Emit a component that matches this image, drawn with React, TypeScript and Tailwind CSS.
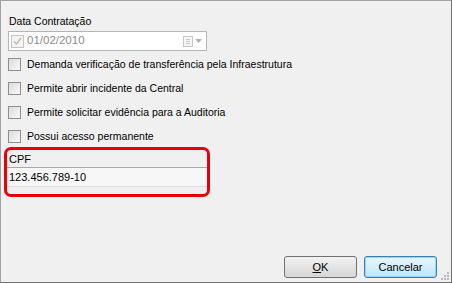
import React from "react";

const checks = [
  "Demanda verificação de transferência pela Infraestrutura",
  "Permite abrir incidente da Central",
  "Permite solicitar evidência para a Auditoria",
  "Possui acesso permanente",
];

function Box({ disabled }: { disabled?: boolean }) {
  return (
    <span
      className={`w-[13px] h-[13px] shrink-0 border ${disabled ? "border-[#c5c5c5] bg-[#f4f4f4]" : "border-[#8f8f8f] bg-gradient-to-br from-[#dcdcdc] to-[#fafafa]"} flex items-center justify-center`}
    >
      {disabled && (
        <svg width="9" height="9" viewBox="0 0 9 9">
          <path d="M1 4.5 L3.5 7 L8 1" fill="none" stroke="#b8b8b8" strokeWidth="1.4" />
        </svg>
      )}
    </span>
  );
}

export default function App() {
  return (
    <div
      className="w-[452px] h-[283px] bg-[#f0f0f0] border border-[#6f6f6f] border-t-[#a0a0a0] border-l-[#a0a0a0] relative text-[10.5px] text-black flex flex-col"
      style={{ fontFamily: '"Liberation Sans", Arial, sans-serif' }}
    >
      <div className="pl-[7px] pt-[14px] flex flex-col">
        <div className="pl-[1px] h-[13px] leading-[13px]">Data Contratação</div>
        <div className="mt-[3px] w-[199px] h-[20px] border border-[#b5b5b5] bg-white flex items-center pl-[2px] pr-[4px]">
          <Box disabled />
          <span className="ml-[3px] text-[#8a8a8a] text-[11.5px]">01/02/2010</span>
          <span className="ml-auto flex items-center gap-[2px]">
            <span className="w-[10px] h-[11px] border border-[#c8c8c8] bg-[#f6f6f6] flex flex-col justify-center gap-[1px] px-[2px]">
              <span className="h-px bg-[#c8c8c8]" />
              <span className="h-px bg-[#c8c8c8]" />
              <span className="h-px bg-[#c8c8c8]" />
            </span>
            <svg width="7" height="4" viewBox="0 0 7 4">
              <path d="M0 0 L7 0 L3.5 4 Z" fill="#b0b0b0" />
            </svg>
          </span>
        </div>
        <div className="mt-[7px] flex flex-col gap-[11px]">
          {checks.map((c) => (
            <div key={c} className="flex items-center h-[13px]">
              <Box />
              <span className="ml-[6px] leading-[13px]">{c}</span>
            </div>
          ))}
        </div>
      </div>
      <div className="ml-[3px] mt-[4px] w-[206px] h-[50px] border-[3px] border-[#e8000b] rounded-[7px] flex flex-col">
        <div className="h-[18px] leading-[18px] pl-[2px] border-b border-[#a9a9a9] text-[11px]">CPF</div>
        <div className="h-[19px] leading-[19px] pl-[2px] bg-[#f7f7f7] border-b border-[#dedede] text-[11px]">123.456.789-10</div>
      </div>
      <div className="mt-auto mb-[4px] mr-[14px] flex justify-end gap-[7px] text-[11px]">
        <button className="w-[73px] h-[22px] rounded-[3px] border border-[#707070] bg-gradient-to-b from-[#f2f2f2] to-[#d6d6d6]">
          <span className="underline">O</span>K
        </button>
        <button className="w-[73px] h-[22px] rounded-[3px] border border-[#3c7fb1] bg-gradient-to-b from-[#eaf6fd] to-[#bee6fd] shadow-[inset_0_0_0_1px_#9ad4f5]">
          Cancelar
        </button>
      </div>
      <svg className="absolute right-[1px] bottom-[1px]" width="11" height="11" viewBox="0 0 11 11">
        {[
          [8, 2],
          [8, 5],
          [5, 5],
          [8, 8],
          [5, 8],
          [2, 8],
        ].map(([x, y]) => (
          <rect key={`${x}-${y}`} x={x} y={y} width="2" height="2" fill="#b8b8b8" />
        ))}
      </svg>
    </div>
  );
}
